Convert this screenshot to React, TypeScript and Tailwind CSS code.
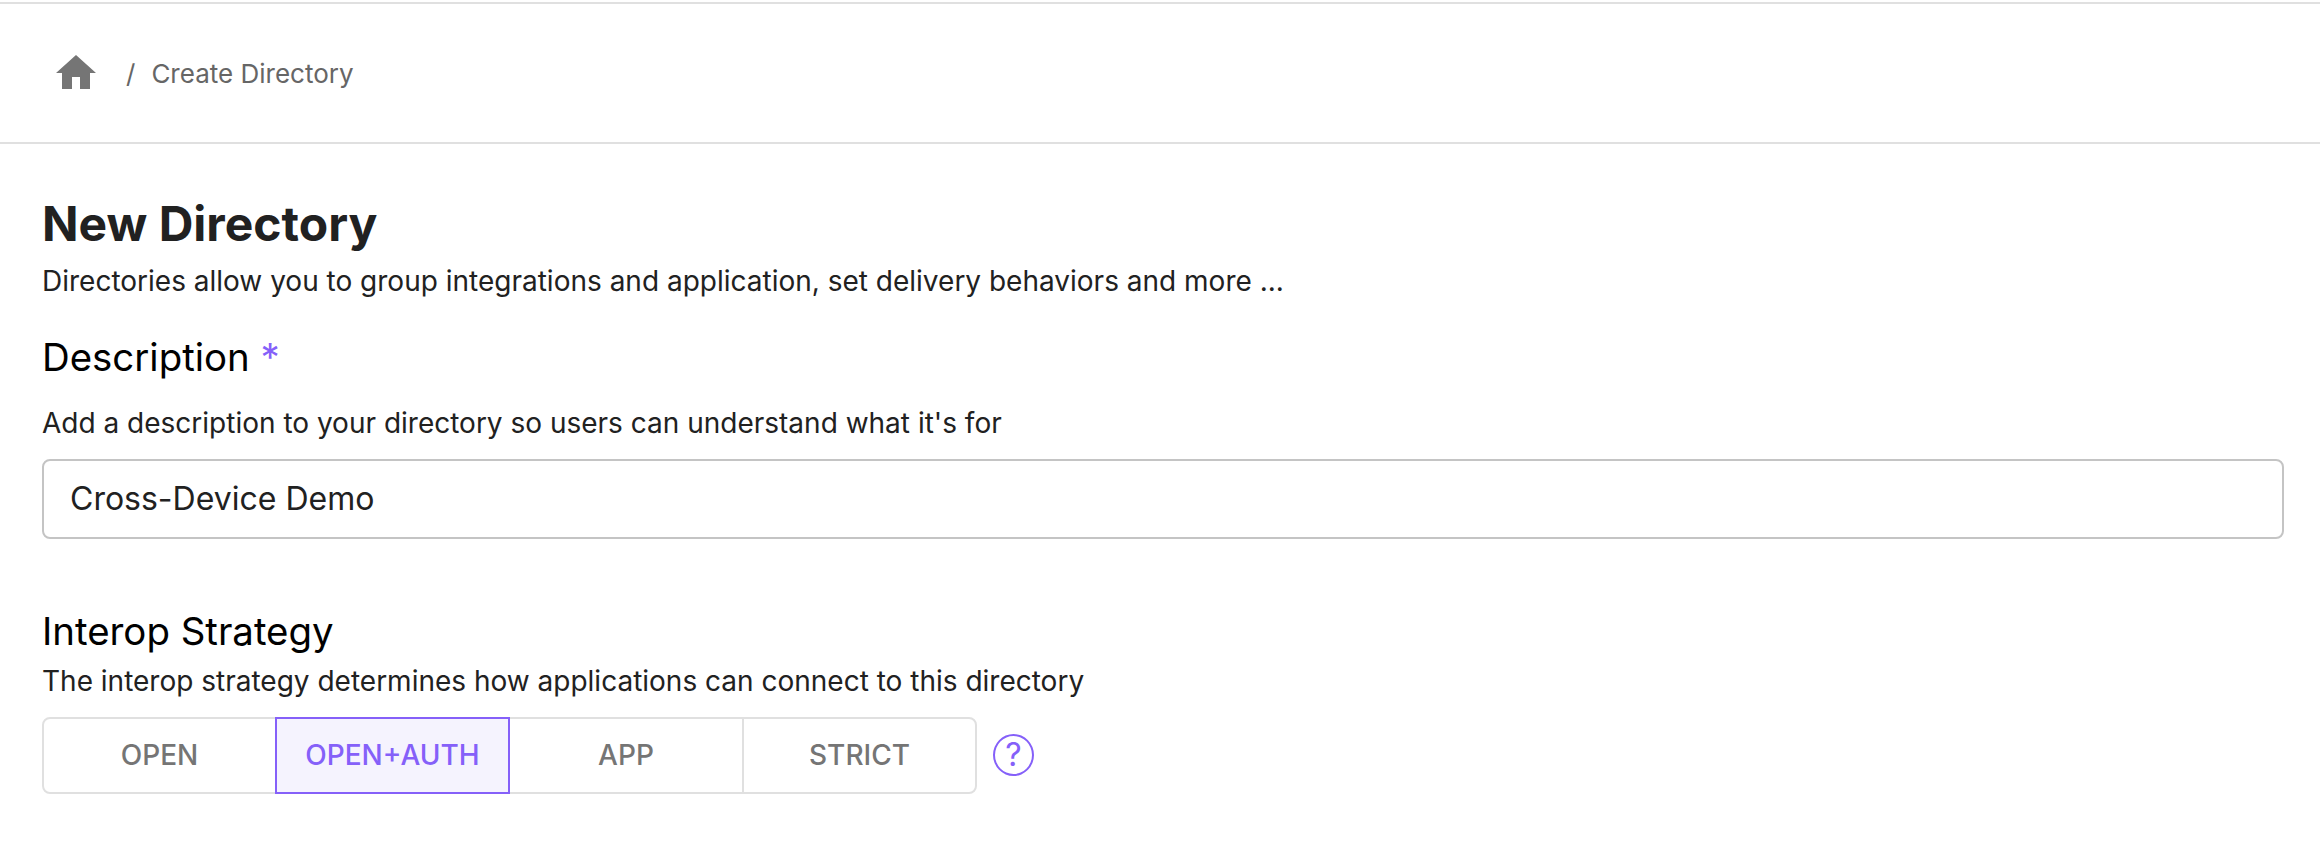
const strategies = ["OPEN", "OPEN+AUTH", "APP", "STRICT"];

export default function App() {
  return (
    <div className="flex h-[868px] w-full flex-col items-start overflow-hidden bg-white pt-0.5 font-[Inter,sans-serif] text-[#212121]">
      <header className="flex h-[142px] w-full shrink-0 items-center border-y-2 border-[#e0e0e0] pl-[52px] text-[26px] text-[#666]">
        <svg className="size-12 fill-[#757575]" viewBox="0 0 24 24"><path d="M10 20v-6h4v6h5v-8h3L12 3 2 12h3v8z" /></svg>
        <nav className="flex gap-4 pl-[26px] leading-[39px]"><span>/</span><span>Create Directory</span></nav>
      </header>
      <main className="flex w-full flex-col items-start pr-9 pl-[42px]">
        <h1 className="mt-[50px] text-[48px] leading-[60px] font-bold">New Directory</h1>
        <p className="mt-[7px] text-[28px] leading-[40px]">Directories allow you to group integrations and application, set delivery behaviors and more ...</p>
        <label className="mt-[34px] text-[38.4px] leading-[44px] text-black">Description <span className="text-[#8560f9]">*</span></label>
        <p className="mt-6 text-[28px] leading-[40px]">Add a description to your directory so users can understand what it's for</p>
        <input className="mt-4 h-20 w-full rounded-lg border-2 border-[#c4c4c4] px-[26px] pb-px text-[32px] leading-[39px] outline-none" defaultValue="Cross-Device Demo" />
        <h2 className="mt-[70px] text-[38.4px] leading-[44px] text-black">Interop Strategy</h2>
        <p className="mt-2 text-[28px] leading-[40px]">The interop strategy determines how applications can connect to this directory</p>
        <div className="mt-4 flex items-center gap-4">
          <div className="grid grid-cols-[233px_233px_234px_235px]">
            {strategies.map((name) => (
              <button
                key={name}
                className={
                  name === "OPEN+AUTH"
                    ? "relative -mr-0.5 h-[77px] border-2 border-[#8560f9] bg-[#f5f3fe] pb-px text-[28px] leading-[34px] font-medium text-[#8560f9]"
                    : "-mr-0.5 h-[77px] border-2 border-[#e0e0e0] pb-px text-[28px] leading-[34px] font-medium text-[#757575] first:rounded-l-lg last:mr-0 last:rounded-r-lg"
                }
              >
                {name}
              </button>
            ))}
          </div>
          <div className="mb-px flex h-[42px] w-[41px] items-center justify-center rounded-[50%] border-2 border-[#8560f9] pb-px text-[32px] leading-[39px] text-[#8560f9]">?</div>
        </div>
      </main>
    </div>
  );
}
